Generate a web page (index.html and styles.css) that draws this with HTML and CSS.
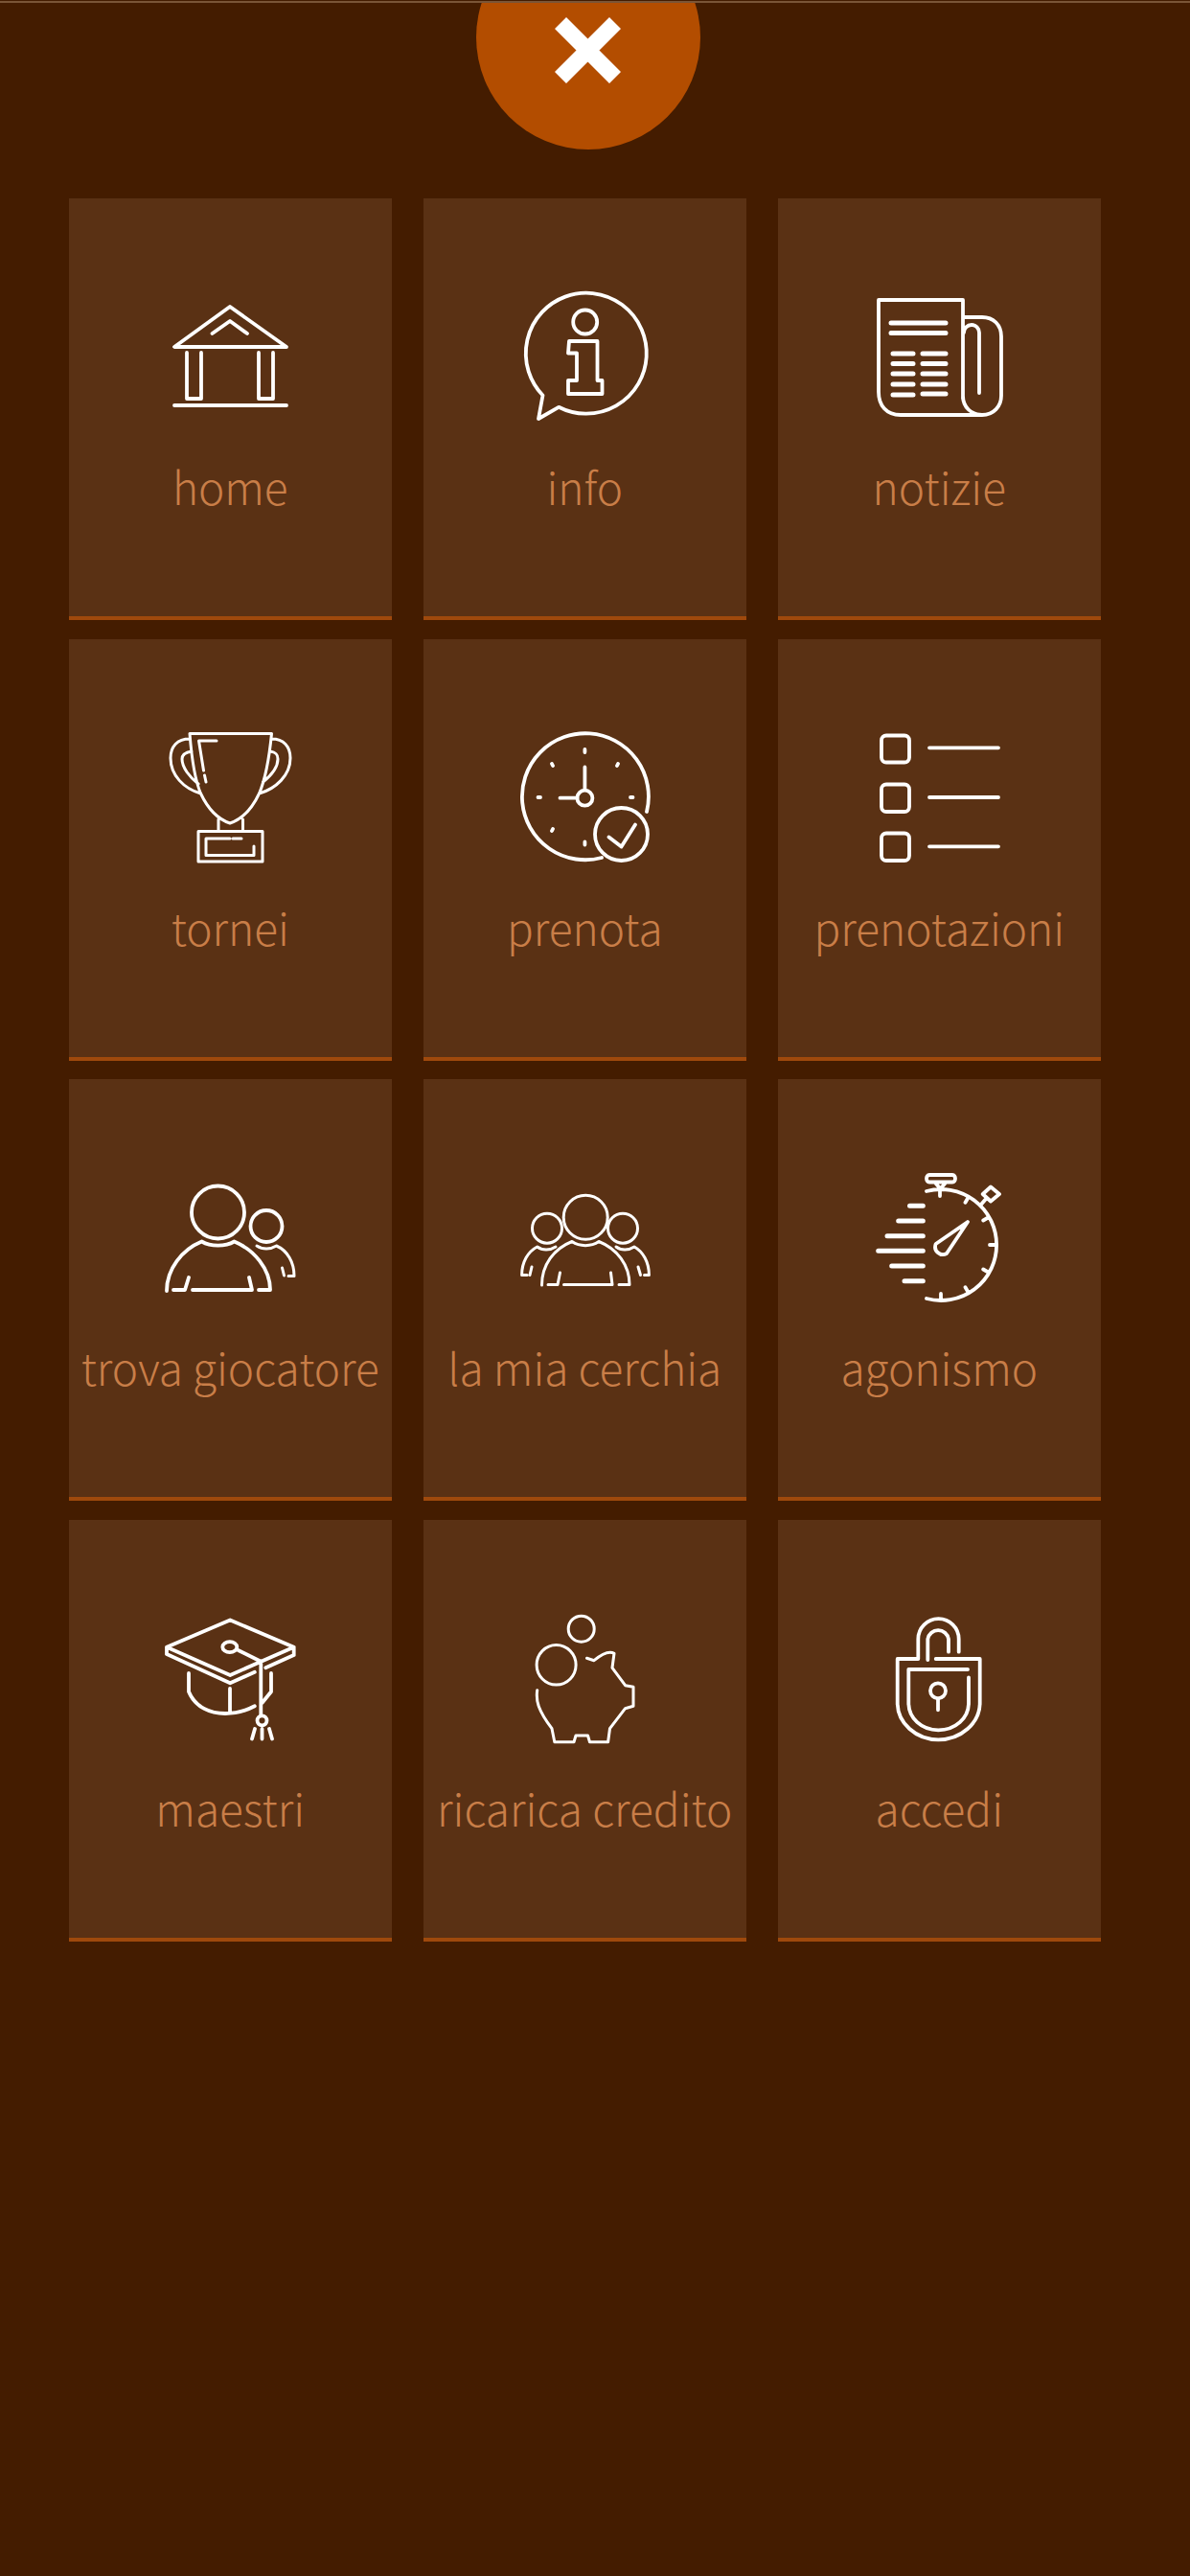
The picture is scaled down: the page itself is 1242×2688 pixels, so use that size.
FILE: index.html
```html
<!DOCTYPE html>
<html lang="it">
<head>
<meta charset="utf-8">
<title>Menu</title>
<link rel="stylesheet" href="styles.css">
</head>
<body>
<main class="menu">
  <button class="close" aria-label="chiudi">
    <svg class="close-x" viewBox="0 0 69 69"><path d="M6 6L63 63M63 6L6 63"/></svg>
  </button>
  <nav class="grid">
    <a class="card">
      <svg class="icon" viewBox="0 0 140 140"><path d="M70 19L12 61H129ZM51.5 47L70 34L88 47M25 67V115H40V67M100 67V115H115V67M12 122H129"/></svg>
      <span class="label">home</span>
    </a>
    <a class="card">
      <svg class="icon" viewBox="0 0 140 140"><path d="M43.100 123.800A63 63 0 1 0 26.500 111.500L22 136ZM54 55H83.500V96H88.500V110H53V96H62V67.500H53Z"/><circle cx="70.700" cy="35" r="12.500"/></svg>
      <span class="label">info</span>
    </a>
    <a class="card">
      <svg class="icon" viewBox="0 0 140 140"><path d="M95 115V12H7V108C7 122 15 132 30 132H115C127 132 135 123 135 112V50C135 38 127 30 115 30H96M112 109V46A8 8 0 0 0 96 46M95 112C95 124 104 132 115 132"/><path class="thick" d="M20 36H77M20 46.500H77M22 68H43M53 68H77M22 78.500H43M53 78.500H77M22 89H43M53 89H77M22 100H43M53 100H77M22 111H43M53 110H77"/></svg>
      <span class="label">notizie</span>
    </a>
    <a class="card">
      <svg class="icon thin" viewBox="0 0 140 140"><path d="M28 4.500H113.500C111 30 107 52 100.500 67C93 83 82 94 70 98C58 94 47 83 39.500 67C33 52 30 30 28 4.500ZM58 94V106.500M83.500 94V106.500M37 106.500H104V138H37ZM70 114H45V131.500H95V122M73 114H82M56 12H37.500L42.500 43M43.500 48L45 55M28 10C15 10 8 18 8 30C8 48 22 62 39.500 67M30 23C24 24 20 26 20 31C20 40 28 50 37 57M113.500 10C126 10 133 18 133 30C133 48 118 62 100.500 67M112 23C118 24 120 26 120 31C120 40 112 49 104.500 55"/></svg>
      <span class="label">tornei</span>
    </a>
    <a class="card">
      <svg class="icon" viewBox="0 0 140 140"><path d="M88 134A66 66 0 1 1 135 86M70.400 39.500V63M44.500 71.700H62.500M70.400 21V24M105 36L104 38M118 71H120.500M70.400 117.500V120.500M21.500 71H24M36 36L37 38M36 106L37 104M95.500 112.500L108.500 122.500L123 99.500"/><circle cx="70.400" cy="71.700" r="8"/><circle cx="108.500" cy="109.500" r="27.500"/></svg>
      <span class="label">prenota</span>
    </a>
    <a class="card">
      <svg class="icon" viewBox="0 0 140 140"><rect x="10" y="6.500" width="29" height="28" rx="5"/><rect x="10" y="57.500" width="29" height="28.500" rx="5"/><rect x="10" y="108.500" width="29" height="28.500" rx="5"/><path d="M60 19.300H132M60 71H132M60 122.300H132"/></svg>
      <span class="label">prenotazioni</span>
    </a>
    <a class="card">
      <svg class="icon" viewBox="0 0 140 140"><circle cx="57.500" cy="45" r="27.500"/><path d="M4 127C4 104 20 84 40.500 75.500C50 81 65 81 74.500 75.500C95 84 112 104 112 126H100M11 126H23L27 113M31 126H93L90 113"/><circle cx="108" cy="59.500" r="16.500"/><path class="thin" d="M98 80C104 84 112 84 118.500 80C130 85 137 97 137 111.500H131M124.500 103L126.500 111"/></svg>
      <span class="label">trova giocatore</span>
    </a>
    <a class="card">
      <svg class="icon thin" viewBox="0 0 140 140"><circle cx="71.200" cy="50.300" r="23"/><circle cx="31" cy="61.700" r="15.500"/><circle cx="110" cy="61.700" r="15.500"/><path d="M25.500 121C25.500 100 38 83 57 75.500C65 81 77 81 85 75.500C104 83 117 100 117 120.500H106M32 120.500H42L44.500 108M48.500 120.500H99L97.500 108M4.600 110.500C4.600 97 11 86 20.700 81C26 85 34 85 40 81M4.600 110.500H10M15 102L13 110.500M137.400 110.500C137.400 97 131 86 122 81C116 85 108 85 103 81M137.400 110.500H132.500M126 102L128.500 110.500"/></svg>
      <span class="label">la mia cerchia</span>
    </a>
    <a class="card">
      <svg class="icon" viewBox="0 0 140 140"><path d="M57 23A58 58 0 1 1 57 135M60 6H84C88 6 88 13.500 84 13.500H60C56 13.500 56 6 60 6ZM66 14L71 20V28M77 14L72 20M101 28.800L97.500 34.800M122.200 50L116.200 53.500M130 79H123M122.200 108L116.200 104.500M101 129.200L97.500 123.200M72 137V130M113 38L119 31M124 18.500L133 26L124 33.500L115.700 26ZM100 55L66.700 78A8 8 0 0 0 78 88Z"/><path class="thick" d="M39.500 38.300H53.300M27.700 54H53.300M16 69.700H53.300M6.700 85.300H53.300M20.700 101H53.300M34 116.700H53.300"/></svg>
      <span class="label">agonismo</span>
    </a>
    <a class="card">
      <svg class="icon" viewBox="0 0 140 140"><path d="M70.200 10.500L136.700 38.700L70.200 68L4 38.700ZM4 46L70.200 76.300L95.800 64.700M107.300 60.300L136.700 47M4 38.700V46M136.700 38.700V47M78.600 42L102.300 53.700V110M96 124L93 134.500M103.500 124V134.500M111 124L114 134.500M27 66V85.300C34 102 50 108 65 108C76 108 87 105 95.800 100.300M70 82V107M113 66V85.300L103.500 97"/><ellipse cx="69.800" cy="38.700" rx="7.500" ry="5.500"/><circle cx="103.500" cy="115.300" r="5"/></svg>
      <span class="label">maestri</span>
    </a>
    <a class="card">
      <svg class="icon thin" viewBox="0 0 140 140"><circle cx="66.700" cy="19.700" r="13.500"/><ellipse cx="40.600" cy="57.300" rx="20.500" ry="20.800"/><path d="M20.700 83.700C19 95 22 105 36 123.700L38.800 137.700H59L61 131H73.500L75.500 137.700H94.600L96.500 123.700L112.600 102.700L121 100.300V80.300L112.600 78.700L99 60.300L101 45.300C95 42 88 46 80 52.700L72.500 50.300"/></svg>
      <span class="label">ricarica credito</span>
    </a>
    <a class="card">
      <svg class="icon" viewBox="0 0 140 140"><path d="M66.700 51H112.700V97C112.700 118 93 135.300 69.300 135.300C46 135.300 26.700 118 26.700 97V51H48.300V30.300A21 21 0 0 1 90.700 30.300V43.700M58.300 52V30.300A11 11 0 0 1 80 30.300V43.700M100 62H38.300V97C38.300 113 52 125.300 69.300 125.300C87 125.300 101 113 101 97V70.300M69 92.500V104.300"/><circle cx="69" cy="84.300" r="8"/></svg>
      <span class="label">accedi</span>
    </a>
  </nav>
</main>
</body>
</html>
```
FILE: styles.css
```css
* {
  box-sizing: border-box;
}

html,
body {
  margin: 0;
  height: 100%;
}

body {
  background: #441c00;
  font-family: "Noto Sans CJK SC", "Noto Sans", sans-serif;
}

.menu {
  position: relative;
  min-height: 2687px;
  margin-top: 1px;
  border-top: 2px solid #7a5537;
  overflow: hidden;
}

.close {
  position: absolute;
  left: 497px;
  top: -81px;
  width: 234px;
  height: 234px;
  padding: 0;
  border: 0;
  border-radius: 50%;
  background: #b34d00;
}

.close-x {
  position: absolute;
  left: 82px;
  top: 96px;
  width: 69px;
  height: 69px;
  fill: none;
  stroke: #fff;
  stroke-width: 17;
}

.grid {
  display: grid;
  grid-template-columns: repeat(3, 336.5px);
  grid-auto-rows: 440px;
  column-gap: 33.5px;
  row-gap: 19.5px;
  padding: 204px 0 0 72px;
}

.card {
  display: flex;
  flex-direction: column;
  align-items: center;
  padding-top: 94px;
  background: #5a3114;
  border-bottom: 4px solid #9f490c;
}

.icon {
  flex: none;
  width: 140px;
  height: 140px;
  fill: none;
  stroke: #fff;
  stroke-width: 3.8;
  stroke-linecap: round;
  stroke-linejoin: round;
}

.icon .thick {
  stroke-width: 5;
}

.icon .thin,
.icon.thin {
  stroke-width: 3;
}

.label {
  margin-top: 36px;
  font-size: 46px;
  font-weight: 300;
  line-height: 60px;
  color: #c97e48;
  white-space: nowrap;
}
```
